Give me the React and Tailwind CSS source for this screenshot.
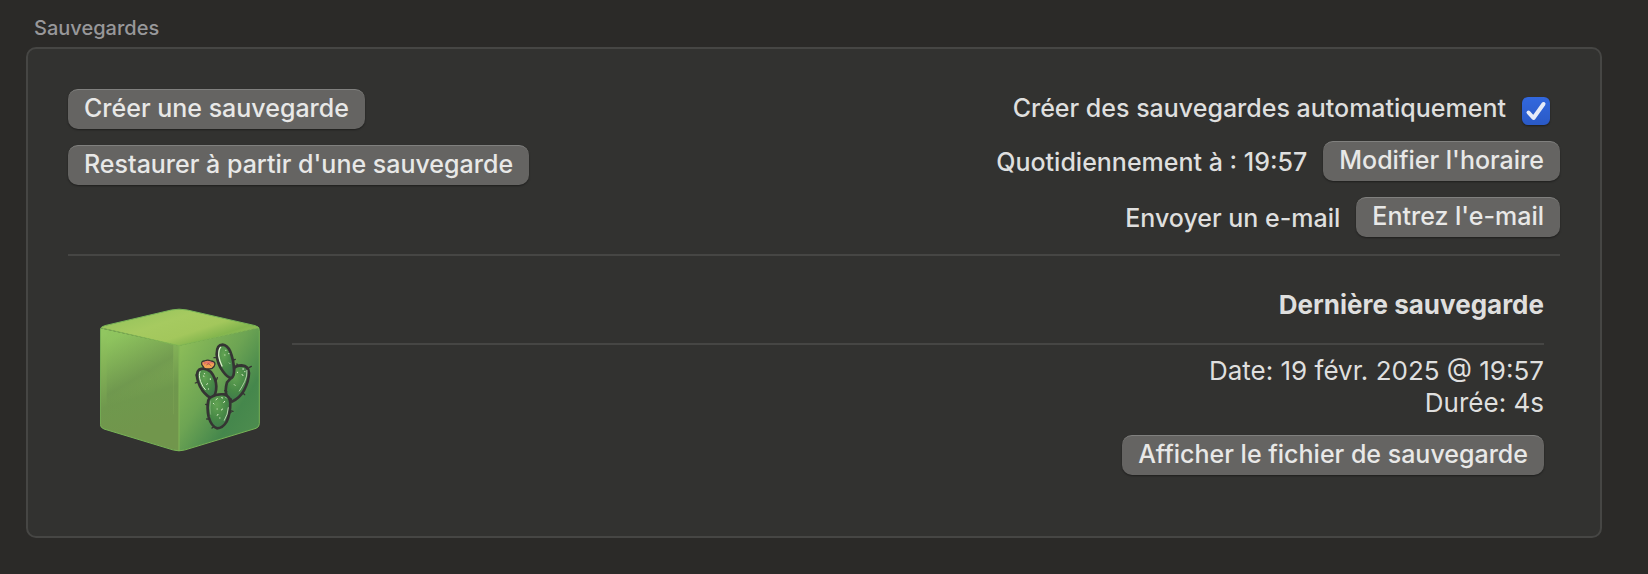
import React from "react";

function PushButton({ children }) {
  return (
    <button
      type="button"
      className="h-10 rounded-[10px] border-t border-[#80807e] bg-[#656462] px-4 pb-1 text-[25px] leading-8 font-medium text-[#e8e8e7] shadow-[0_1px_2px_rgba(0,0,0,0.4)]"
    >
      {children}
    </button>
  );
}

function CactusCube() {
  return (
    <svg className="mb-1 h-36 w-40 shrink-0" viewBox="30 42 480 430" role="img" aria-label="Cactus">
      <defs>
        <linearGradient id="left" gradientUnits="userSpaceOnUse" x1="70" y1="110" x2="160" y2="400">
          <stop offset="0" stopColor="#91c660" />
          <stop offset="0.25" stopColor="#86b658" />
          <stop offset="0.7" stopColor="#6f984d" />
          <stop offset="1" stopColor="#71964c" />
        </linearGradient>
        <linearGradient id="inner" gradientUnits="userSpaceOnUse" x1="90" y1="120" x2="190" y2="290">
          <stop offset="0" stopColor="#8ec45e" stopOpacity="0.6" />
          <stop offset="0.7" stopColor="#6b924d" stopOpacity="0.6" />
          <stop offset="1" stopColor="#71964c" stopOpacity="0" />
        </linearGradient>
        <linearGradient id="right" x1="0.1" y1="0.1" x2="0.85" y2="0.85">
          <stop offset="0" stopColor="#8abb58" />
          <stop offset="0.45" stopColor="#6da453" />
          <stop offset="0.8" stopColor="#45874c" />
          <stop offset="1" stopColor="#4b8b4e" />
        </linearGradient>
        <linearGradient id="top" x1="0.1" y1="0.2" x2="0.9" y2="0.75">
          <stop offset="0" stopColor="#97c45c" />
          <stop offset="0.35" stopColor="#a6ca60" />
          <stop offset="0.65" stopColor="#a3c75c" />
          <stop offset="0.85" stopColor="#84b64e" />
          <stop offset="1" stopColor="#94bd5a" />
        </linearGradient>
        <radialGradient id="pad" cx="0.4" cy="0.3" r="0.7">
          <stop offset="0" stopColor="#62a352" />
          <stop offset="0.6" stopColor="#478846" />
          <stop offset="1" stopColor="#3f7a4c" />
        </radialGradient>
      </defs>

      {/* faces */}
      <path d="M31 102 L267 154 V470 Q260 470 252 467 L42 404 Q31 400 31 390 Z" fill="url(#left)" />
      <path d="M50 108 L250 151 V400 L50 360 Z" fill="url(#inner)" />
      <path d="M267 154 L508 100 V388 Q508 398 498 402 L282 467 Q274 470 267 470 Z" fill="url(#right)" />
      <path d="M34 100 Q36 96 44 94 L244 47 Q267 42 292 47 L496 94 Q504 96 507 100 L267 154 Z" fill="url(#top)" />
      <path
        d="M31 106 Q32 97 44 94 L244 47 Q267 42 292 47 L496 94 Q508 97 508 108 V388 Q508 398 498 402 L284 467 Q267 472 250 467 L42 404 Q31 400 31 390 Z"
        fill="none"
        stroke="#78b557"
        strokeWidth="3"
      />
      <path d="M34 101 L267 154 L506 100" fill="none" stroke="#82b955" strokeWidth="3" />
      <path d="M267 154 V470" stroke="#82b656" strokeWidth="3" />
      <path d="M250 152 V360" stroke="#86ad59" strokeWidth="2" opacity="0.5" />

      {/* pads */}
      <g fill="url(#pad)" stroke="#353433" strokeWidth="8" strokeLinejoin="round">
        <path d="M432 222 Q436 214 455 213 Q476 215 477 236 Q476 262 462 288 Q450 310 426 322 L410 304 Q404 288 411 264 L422 252 Q432 246 432 222 Z" />
        <path d="M398 151 Q412 152 421 172 Q431 196 432 226 Q433 246 424 251 Q412 250 398 230 Q382 208 380 180 Q380 151 398 151 Z" />
        <path d="M327 226 Q345 218 362 232 Q378 252 379 276 Q379 298 368 313 Q352 308 337 288 Q320 262 321 240 Q322 230 327 226 Z" />
        <path d="M364 308 Q378 298 402 300 Q420 306 421 326 Q421 358 410 382 Q398 402 381 402 Q364 396 356 368 Q350 340 355 318 Q358 310 364 308 Z" />
      </g>
      <g fill="none" stroke="#353433" strokeWidth="4" strokeLinecap="round">
        <path d="M372 190 h8 M430 197 l6 -2 M477 220 l7 -4 M316 266 l5 -2 M320 248 l-2 -6 M379 258 l3 -8 M459 296 l5 5 M404 289 l6 3 M347 330 l7 2 M350 374 l8 0 M421 349 l8 2 M419 356 l4 -2 M370 398 l-4 3 M424 322 v-8 M442 212 l-1 -3" />
      </g>

      {/* highlights and spines */}
      <g fill="none" stroke="#dceecb" strokeLinecap="round">
        <path d="M392 159 Q386 164 386 184 Q389 202 396 215" strokeWidth="4" />
        <path d="M330 232 Q325 242 332 262 Q338 278 346 286" strokeWidth="3" />
        <path d="M471 228 Q472 246 464 262 Q456 278 448 290" strokeWidth="3" opacity="0.7" />
        <path d="M415 340 Q414 360 403 378" strokeWidth="3" opacity="0.75" />
        <path d="M362 320 Q358 340 362 360" strokeWidth="2" opacity="0.45" />
        <path
          d="M404 182 h1 M416 178 h1 M418 206 l1 1 M407 168 h1 M340 245 l2 1 M361 253 v3 M350 270 l3 -2 M355 284 h1 M343 238 h1 M458 224 h3 M456 240 l3 4 M464 232 h1 M433 271 l2 2 M442 234 h1 M378 316 l4 -3 M395 310 l3 1 M404 321 l-3 4 M370 327 l2 2 M398 344 l-4 3 M381 344 h1 M384 360 l-2 3 M389 371 h1 M408 310 l1 1"
          strokeWidth="3"
        />
      </g>

      {/* flower */}
      <path d="M335 210 Q334 199 344 200 Q354 195 361 200 Q374 200 375 209 Q374 217 366 222 Q354 226 343 222 Z" fill="#f2a354" stroke="#353433" strokeWidth="4" />
      <path d="M339 204 Q350 199 360 201 Q370 203 371 210 L362 206 L355 212 L349 206 L344 212 Z" fill="#e27367" />
      <path d="M349 212 L356 208 L364 215" fill="none" stroke="#8f4639" strokeWidth="2" />
    </svg>
  );
}

export default function App() {
  return (
    <div className="min-h-screen bg-[#2b2a28] pt-4 pr-[46px] pb-9 pl-[26px] font-['Inter','Liberation_Sans',sans-serif] text-[25px] leading-8 font-medium text-[#dfdfde]">
      <h2 className="mb-[7px] pl-2 text-[20px] leading-6 font-medium text-[#98989a]">Sauvegardes</h2>

      <section className="rounded-[10px] border-2 border-[#464644] bg-[#323230] px-10 pt-10 pb-[61px]">
        <div className="flex items-start justify-between border-b-2 border-[#464644] pb-[17px]">
          <div className="flex flex-col items-start gap-4">
            <PushButton>Créer une sauvegarde</PushButton>
            <PushButton>Restaurer à partir d'une sauvegarde</PushButton>
          </div>

          <div className="flex flex-col items-end gap-4">
            <div className="flex h-9 items-center gap-4 pr-[10px]">
              <label htmlFor="auto-backup" className="pt-0.5">
                Créer des sauvegardes automatiquement
              </label>
              <span className="relative mt-2 flex size-7">
                <input
                  id="auto-backup"
                  type="checkbox"
                  defaultChecked
                  className="peer size-7 appearance-none rounded-md bg-[#656462] shadow-[0_1px_2px_rgba(0,0,0,0.4)] checked:bg-linear-to-b checked:from-[#3268de] checked:to-[#2a5ac6]"
                />
                <svg
                  className="pointer-events-none absolute inset-0 hidden size-7 peer-checked:block"
                  viewBox="0 0 28 28"
                  fill="none"
                  stroke="#e6ebf8"
                  strokeWidth="4"
                  strokeLinecap="round"
                  strokeLinejoin="round"
                >
                  <path d="M6.5 15.5 L11.5 21 L21.5 7" />
                </svg>
              </span>
            </div>
            <div className="flex items-center gap-4">
              <span className="pt-0.5">Quotidiennement à : 19:57</span>
              <PushButton>Modifier l'horaire</PushButton>
            </div>
            <div className="flex items-center gap-4">
              <span className="pt-0.5">Envoyer un e-mail</span>
              <PushButton>Entrez l'e-mail</PushButton>
            </div>
          </div>
        </div>

        <div className="flex items-center gap-8 pt-[33px] pr-4 pl-8">
          <CactusCube />
          <div className="flex grow flex-col items-end text-[26px] font-normal">
            <h3 className="w-full border-b-2 border-[#464644] pb-[22px] text-right font-bold">Dernière sauvegarde</h3>
            <p className="mt-[10px]">Date: 19 févr. 2025 @ 19:57</p>
            <p className="mb-4">Durée: 4s</p>
            <PushButton>Afficher le fichier de sauvegarde</PushButton>
          </div>
        </div>
      </section>
    </div>
  );
}
